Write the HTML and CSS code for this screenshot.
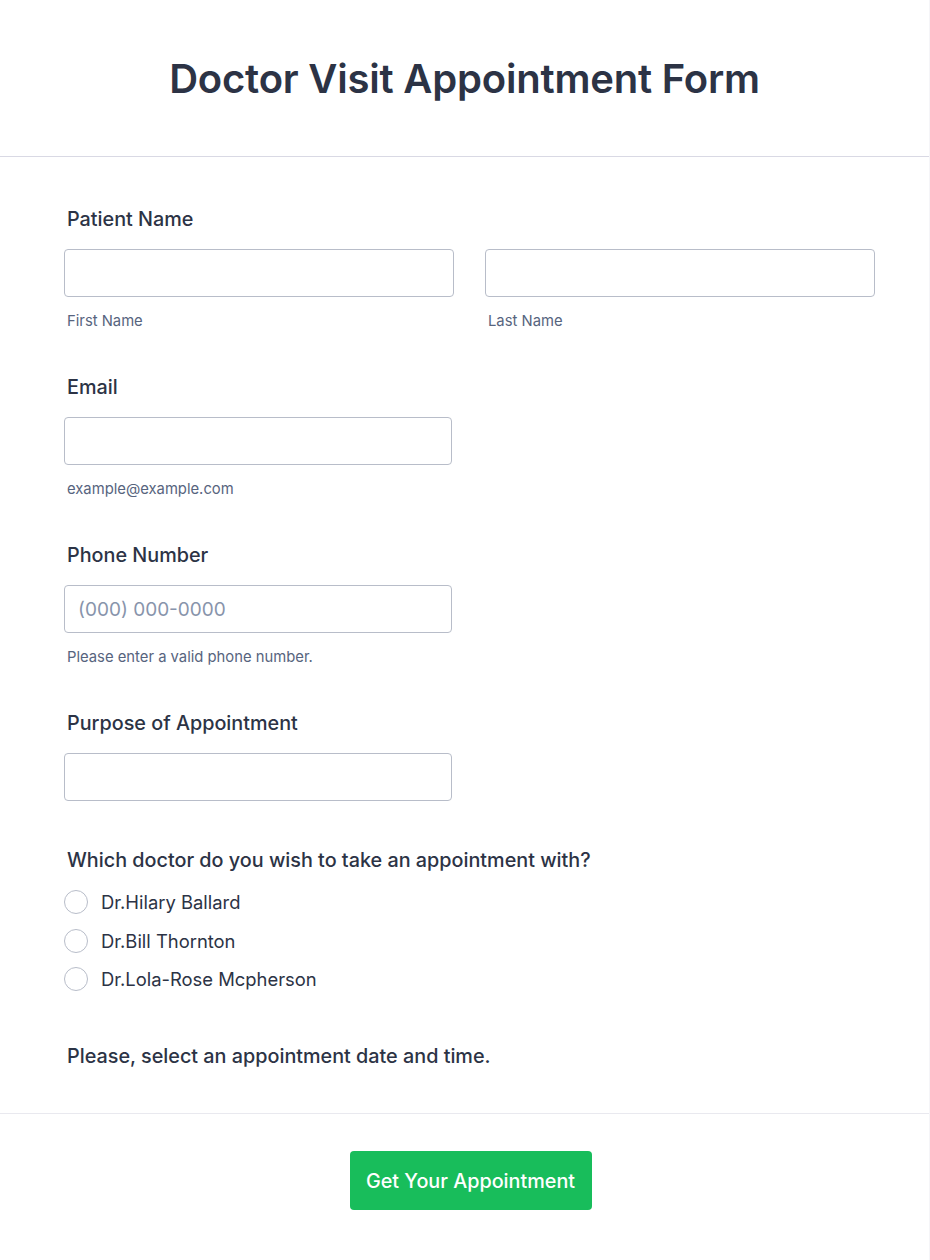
FILE: index.html
```html
<!DOCTYPE html>
<html lang="en">
<head>
    <meta charset="UTF-8">
    <meta name="viewport" content="width=device-width, initial-scale=1.0">
    <title>Doctor Visit Appointment Form</title>
    <link rel="stylesheet" href="styles.css">
</head>
<body>
    <div class="page">
        <!-- Form header -->
        <div class="form-header">
            <h1>Doctor Visit Appointment Form</h1>
        </div>

        <form class="form-body">
            <!-- Patient name -->
            <div class="field">
                <label class="field-label">Patient Name</label>
                <div class="name-row">
                    <div class="name-col">
                        <input type="text" class="text-input">
                        <span class="sublabel">First Name</span>
                    </div>
                    <div class="name-col">
                        <input type="text" class="text-input">
                        <span class="sublabel">Last Name</span>
                    </div>
                </div>
            </div>

            <!-- Email -->
            <div class="field">
                <label class="field-label">Email</label>
                <input type="email" class="text-input short">
                <span class="sublabel">example@example.com</span>
            </div>

            <!-- Phone -->
            <div class="field">
                <label class="field-label">Phone Number</label>
                <input type="tel" class="text-input short" placeholder="(000) 000-0000">
                <span class="sublabel">Please enter a valid phone number.</span>
            </div>

            <!-- Purpose -->
            <div class="field no-sub">
                <label class="field-label">Purpose of Appointment</label>
                <input type="text" class="text-input short">
            </div>

            <!-- Doctor choice -->
            <div class="field radios">
                <label class="field-label">Which doctor do you wish to take an appointment with?</label>
                <div class="radio-list">
                    <label class="radio-row"><span class="radio-circle"></span>Dr.Hilary Ballard</label>
                    <label class="radio-row"><span class="radio-circle"></span>Dr.Bill Thornton</label>
                    <label class="radio-row"><span class="radio-circle"></span>Dr.Lola-Rose Mcpherson</label>
                </div>
            </div>

            <!-- Date and time -->
            <div class="field date">
                <label class="field-label">Please, select an appointment date and time.</label>
            </div>
        </form>

        <!-- Submit -->
        <div class="form-footer">
            <button type="button" class="submit-btn">Get Your Appointment</button>
        </div>
    </div>
</body>
</html>
```

FILE: styles.css
```css
* {
    margin: 0;
    padding: 0;
    box-sizing: border-box;
}
body {
    font-family: Inter, "Noto Sans", sans-serif;
    background: #fff;
    color: #2c3345;
}

.page {
    width: 930px;
    min-height: 1260px;
    border-right: 1px solid #f5f5f8;
}

/* Header */
.form-header {
    height: 157px;
    display: flex;
    align-items: center;
    justify-content: center;
    border-bottom: 1px solid #d9d9e4;
}
.form-header h1 {
    font-size: 40px;
    font-weight: 600;
    color: #2c3345;
    letter-spacing: -0.2px;
}

/* Form body */
.form-body {
    padding: 50px 54px 45px 64px;
    border-bottom: 1px solid #e9e9ef;
}
.field {
    display: flex;
    flex-direction: column;
    margin-bottom: 45px;
}
.field.no-sub {
    margin-bottom: 47px;
}
.field.radios {
    margin-bottom: 45px;
}
.field.date {
    margin-bottom: 0;
}
.field-label {
    font-size: 19.8px;
    line-height: 24px;
    font-weight: 500;
    color: #2c3345;
    padding-left: 3px;
    margin-bottom: 18px;
}
.field.date .field-label {
    margin-bottom: 0;
}
.field.radios .field-label {
    margin-bottom: 11px;
}

.name-row {
    display: flex;
    gap: 31px;
}
.name-col {
    width: 390px;
    display: flex;
    flex-direction: column;
}

.text-input {
    width: 100%;
    height: 48px;
    border: 1px solid #b8bdc9;
    border-radius: 4px;
    padding: 0 13px;
    font-family: inherit;
    font-size: 19px;
    color: #2c3345;
    outline: none;
}
.text-input.short {
    width: 388px;
}
.text-input::placeholder {
    color: #8894ab;
}

.sublabel {
    font-size: 14.8px;
    line-height: 18px;
    color: #57647e;
    padding-left: 3px;
    margin-top: 15px;
}

/* Radio options */
.radio-list {
    display: flex;
    flex-direction: column;
}
.radio-row {
    height: 38.5px;
    display: flex;
    align-items: center;
    gap: 13px;
    font-size: 18.4px;
    color: #2c3345;
}
.radio-circle {
    width: 24px;
    height: 24px;
    border: 1px solid #b8bdc9;
    border-radius: 50%;
    background: #fff;
}

/* Footer */
.form-footer {
    display: flex;
    justify-content: center;
    padding: 37px 0 0 12px;
}
.submit-btn {
    width: 242px;
    height: 59px;
    background-color: #18bd5b;
    color: #fff;
    border: none;
    border-radius: 4px;
    font-family: inherit;
    font-size: 19.8px;
    font-weight: 500;
    padding-top: 2px;
}
```
